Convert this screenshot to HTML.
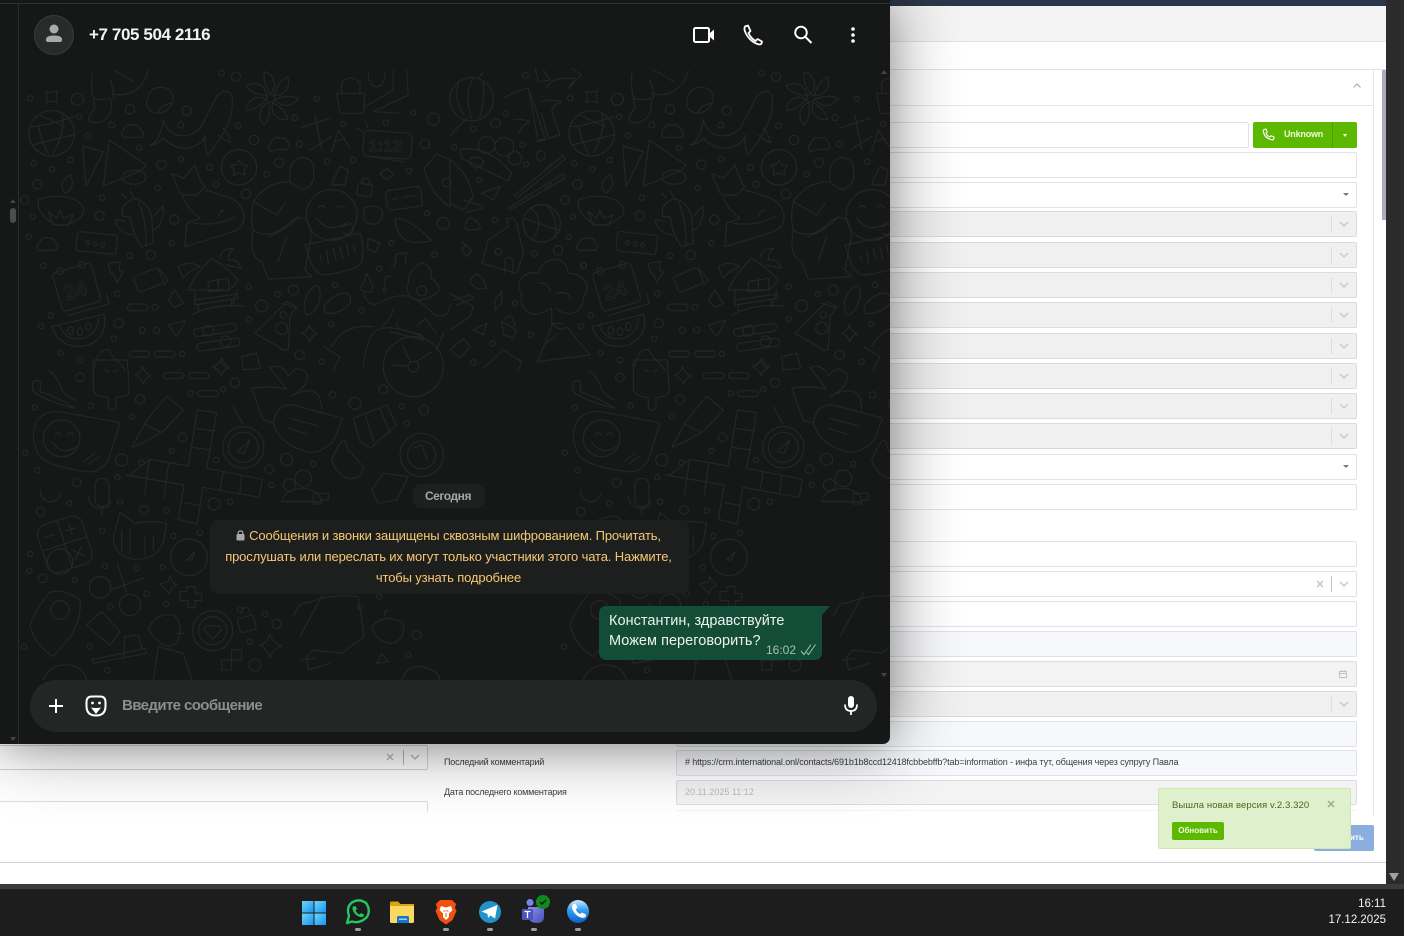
<!DOCTYPE html>
<html lang="ru"><head><meta charset="utf-8"><title>WhatsApp</title>
<style>
html,body{margin:0;padding:0;background:#fff}
body{width:1404px;height:936px;position:relative;overflow:hidden;font-family:"Liberation Sans","Noto Sans CJK SC",sans-serif}
.a{position:absolute}
.f{position:absolute;left:860px;width:495px;height:24px;border:1px solid #dfe2ea;border-radius:2px;background:#fff}
.g{background:#f0f0f1;border-color:#d9dbe2}
.l{background:#f7f8fb}
.s{background:#f3f3f4;border-color:#dcdcdf}
.dv{position:absolute;left:470px;top:4px;width:1px;height:16px;background:#dcdcdf}
.ch{position:absolute;left:477px;top:7px;width:12px;height:10px}
.ca{position:absolute;left:482px;top:10px;width:0;height:0;border:3px solid transparent;border-top:3px solid #777;border-bottom:0}
.t{position:absolute;white-space:nowrap}
.sh{position:absolute;left:0;top:0;width:890px;height:744px;border-radius:0 0 7px 0;box-shadow:0 0 70px rgba(0,0,0,.46),0 6px 28px rgba(0,0,0,.1)}
</style></head><body>

<!-- background app -->
<div class="a" style="left:860px;top:0;width:526px;height:6px;background:#2b3648"></div>
<div class="a" style="left:860px;top:6px;width:526px;height:35px;background:#f4f4f5"></div>
<div class="a" style="left:860px;top:41px;width:526px;height:1px;background:#dfe2e8"></div>
<div class="a" style="left:860px;top:69px;width:526px;height:1px;background:#dfe2e8"></div>
<div class="a" style="left:860px;top:105px;width:513px;height:1px;background:#e4e7ed"></div>
<div class="a" style="left:1373px;top:70px;width:1px;height:745px;background:#e4e6ec"></div>
<div class="a" style="left:1382px;top:70px;width:4px;height:150px;background:#a9aeb9"></div>
<svg class="a" style="left:1352px;top:82px" width="10" height="8"><path d="M1.5 5.5L5 2l3.5 3.5" fill="none" stroke="#a8adb8" stroke-width="1.2"/></svg>

<div class="f" style="top:122px;width:387px"></div>
<div class="a" style="left:1253px;top:122px;width:104px;height:26px;background:#5cb800;border-radius:2px"></div>
<div class="a" style="left:1332px;top:122px;width:1px;height:26px;background:#4f9e00"></div>
<svg class="a" style="left:1262px;top:128px" width="13" height="13" viewBox="0 0 13 13"><path d="M2 1.500L4 1l1.200 3L4 5.200Q5 8 7.800 9l1.200-1.200 3 1.200-.4 2.300Q11.400 12 10 11.800 2.500 10.500 1.200 3 1.200 2 2 1.500Z" fill="none" stroke="#fff" stroke-width="1.100"/></svg>
<div class="t" style="left:1284px;top:128px;font-size:9px;line-height:13px;font-weight:bold;color:#eefadb;letter-spacing:-.2px">Unknown</div>
<div class="a" style="left:1343px;top:134px;border:2px solid transparent;border-top:3px solid #fff;border-bottom:0"></div>

<div class="f" style="top:152px"></div>
<div class="f" style="top:182px"><div class="ca"></div></div>
<div class="f g" style="top:211px"><div class="dv"></div><svg class="ch" viewBox="0 0 12 10"><path d="M2 3l4 4 4-4" fill="none" stroke="#c5c7cc" stroke-width="1.300"/></svg></div>
<div class="f g" style="top:242px"><div class="dv"></div><svg class="ch" viewBox="0 0 12 10"><path d="M2 3l4 4 4-4" fill="none" stroke="#c5c7cc" stroke-width="1.300"/></svg></div>
<div class="f g" style="top:272px"><div class="dv"></div><svg class="ch" viewBox="0 0 12 10"><path d="M2 3l4 4 4-4" fill="none" stroke="#c5c7cc" stroke-width="1.300"/></svg></div>
<div class="f g" style="top:302px"><div class="dv"></div><svg class="ch" viewBox="0 0 12 10"><path d="M2 3l4 4 4-4" fill="none" stroke="#c5c7cc" stroke-width="1.300"/></svg></div>
<div class="f g" style="top:333px"><div class="dv"></div><svg class="ch" viewBox="0 0 12 10"><path d="M2 3l4 4 4-4" fill="none" stroke="#c5c7cc" stroke-width="1.300"/></svg></div>
<div class="f g" style="top:363px"><div class="dv"></div><svg class="ch" viewBox="0 0 12 10"><path d="M2 3l4 4 4-4" fill="none" stroke="#c5c7cc" stroke-width="1.300"/></svg></div>
<div class="f g" style="top:393px"><div class="dv"></div><svg class="ch" viewBox="0 0 12 10"><path d="M2 3l4 4 4-4" fill="none" stroke="#c5c7cc" stroke-width="1.300"/></svg></div>
<div class="f g" style="top:423px"><div class="dv"></div><svg class="ch" viewBox="0 0 12 10"><path d="M2 3l4 4 4-4" fill="none" stroke="#c5c7cc" stroke-width="1.300"/></svg></div>
<div class="f" style="top:454px"><div class="ca"></div></div>
<div class="f" style="top:484px"></div>
<div class="f" style="top:541px"></div>
<div class="f" style="top:571px"><svg class="a" style="left:454px;top:7px" width="10" height="10"><path d="M2 2l6 6M8 2l-6 6" stroke="#c2c4c9" stroke-width="1.400"/></svg><div class="dv" style="background:#bfc1c6"></div><svg class="ch" viewBox="0 0 12 10"><path d="M2 3l4 4 4-4" fill="none" stroke="#c5c7cc" stroke-width="1.300"/></svg></div>
<div class="f" style="top:601px"></div>
<div class="f l" style="top:631px"></div>
<div class="f s" style="top:661px"><svg class="a" style="left:477px;top:7px" width="10" height="10"><path d="M1.500 2.500h7v6h-7zM1.500 4.500h7M3.500 1v2M6.500 1v2" fill="none" stroke="#c0c2c6"/></svg></div>
<div class="f g" style="top:691px"><div class="dv" style="background:#e0e0e4"></div><svg class="ch" viewBox="0 0 12 10"><path d="M2 3l4 4 4-4" fill="none" stroke="#c5c7cc" stroke-width="1.300"/></svg></div>
<div class="f l" style="left:676px;top:721px;width:679px"></div>

<div class="f l" style="left:676px;top:750px;width:679px;height:24px"></div>
<div class="t" style="left:685px;top:756px;font-size:9px;line-height:12px;color:#3a3d45;letter-spacing:-.12px">#&nbsp;https://crm.international.onl/contacts/691b1b8ccd12418fcbbebffb?tab=information - инфа тут, общения через супругу Павла</div>
<div class="f s" style="left:676px;top:780px;width:679px;height:23px"></div>
<div class="t" style="left:685px;top:786px;font-size:9px;line-height:12px;color:#b9bbc0">20.11.2025 11:12</div>
<div class="a" style="left:676px;top:810px;width:681px;height:1px;background:#f2f3f6"></div>

<div class="f" style="left:-20px;top:745px;width:446px;height:23px;border-color:#cfd3dd"></div>
<svg class="a" style="left:385px;top:752px" width="10" height="10"><path d="M2 2l6 6M8 2l-6 6" stroke="#b4b6bb" stroke-width="1.400"/></svg>
<div class="a" style="left:403px;top:750px;width:1px;height:15px;background:#b4b6bb"></div>
<svg class="a" style="left:409px;top:752px" width="12" height="10"><path d="M2 3l4 4 4-4" fill="none" stroke="#b4b6bb" stroke-width="1.300"/></svg>
<div class="a" style="left:-20px;top:801px;width:446px;height:14px;border:1px solid #dadde6;border-bottom:0;border-radius:2px"></div>
<div class="a" style="left:0;top:812px;width:430px;height:8px;background:#fff"></div>
<div class="t" style="left:444px;top:756px;font-size:9px;line-height:12px;color:#3c3f46;letter-spacing:-.2px">Последний комментарий</div>
<div class="t" style="left:444px;top:786px;font-size:9px;line-height:12px;color:#3c3f46;letter-spacing:-.2px">Дата последнего комментария</div>

<div class="a" style="left:1314px;top:825px;width:60px;height:26px;background:#8aaee0;border-radius:2px"></div>
<div class="t" style="left:1350px;top:832px;font-size:8px;line-height:12px;font-weight:bold;color:#fff">ить</div>
<div class="a" style="left:0;top:862px;width:1386px;height:1px;background:#ccd1dc"></div>

<!-- shadow + WA window -->
<div class="sh"></div>
<div class="a" style="left:0;top:0;width:890px;height:744px;background:#161717;border-radius:0 0 7px 0;overflow:hidden">
<svg class="a" style="left:0;top:0" width="890" height="744" viewBox="0 0 890 744">
<defs>
<clipPath id="cp"><rect x="19" y="68" width="871" height="676"/></clipPath>
<g id="tile" fill="none" stroke="#252727" stroke-linejoin="round" stroke-linecap="round">
<g transform="translate(20 70) scale(.3333)" stroke-width="3.600">
<circle cx="172" cy="88" r="18"/><circle cx="30" cy="85" r="8"/><circle cx="177" cy="140" r="8"/><circle cx="275" cy="165" r="9"/><circle cx="203" cy="197" r="8"/><circle cx="330" cy="118" r="14"/><circle cx="500" cy="122" r="14"/><circle cx="482" cy="165" r="9"/><circle cx="655" cy="167" r="8"/><circle cx="702" cy="210" r="14"/><circle cx="838" cy="222" r="9"/><circle cx="777" cy="278" r="14"/><circle cx="922" cy="275" r="8"/><circle cx="1000" cy="270" r="8"/><circle cx="1215" cy="222" r="14"/><circle cx="1167" cy="302" r="8"/><circle cx="1240" cy="148" r="18"/><circle cx="1180" cy="128" r="8"/><circle cx="1098" cy="158" r="8"/><circle cx="970" cy="162" r="8"/><circle cx="825" cy="143" r="9"/><circle cx="890" cy="86" r="8"/><circle cx="648" cy="20" r="14"/><circle cx="605" cy="9" r="8"/><circle cx="357" cy="233" r="8"/><circle cx="424" cy="284" r="14"/><circle cx="483" cy="267" r="8"/><circle cx="570" cy="292" r="9"/><circle cx="740" cy="312" r="8"/><circle cx="588" cy="343" r="9"/><circle cx="678" cy="372" r="14"/><circle cx="413" cy="354" r="8"/><circle cx="246" cy="383" r="8"/><circle cx="150" cy="270" r="8"/><circle cx="97" cy="298" r="8"/><circle cx="42" cy="280" r="8"/><circle cx="52" cy="343" r="14"/><circle cx="15" cy="390" r="13"/><circle cx="38" cy="440" r="8"/><circle cx="239" cy="437" r="14"/><circle cx="463" cy="449" r="14"/><circle cx="455" cy="520" r="8"/><circle cx="392" cy="555" r="14"/><circle cx="330" cy="557" r="8"/><circle cx="26" cy="501" r="8"/><circle cx="70" cy="587" r="8"/><circle cx="292" cy="671" r="8"/><circle cx="405" cy="712" r="9"/><circle cx="92" cy="736" r="8"/><circle cx="63" cy="768" r="8"/><circle cx="296" cy="760" r="14"/><circle cx="367" cy="781" r="9"/><circle cx="410" cy="781" r="9"/><circle cx="282" cy="806" r="8"/><circle cx="122" cy="849" r="8"/><circle cx="181" cy="870" r="8"/><circle cx="486" cy="852" r="8"/><circle cx="686" cy="650" r="8"/><circle cx="820" cy="660" r="15"/><circle cx="773" cy="672" r="8"/><circle cx="725" cy="708" r="18"/><circle cx="686" cy="748" r="8"/><circle cx="839" cy="855" r="14"/><circle cx="905" cy="875" r="8"/><circle cx="934" cy="763" r="8"/><circle cx="945" cy="645" r="8"/><circle cx="1025" cy="722" r="8"/><circle cx="1077" cy="596" r="8"/><circle cx="1115" cy="520" r="8"/><circle cx="1243" cy="554" r="8"/><circle cx="1221" cy="430" r="8"/><circle cx="1270" cy="460" r="18"/>
<circle cx="95" cy="190" r="68"/><path d="M30 170Q90 165 160 140M35 225L160 195M55 170Q65 215 85 250M125 130Q140 175 100 250M60 135Q90 150 135 170"/>
<path d="M78 65Q95 70 112 62 106 80 112 98 95 90 78 98 84 80 78 65Z"/>
<path d="M216 10Q212 50 220 85 245 92 272 85 280 120 260 145 235 165 210 155 198 145 225 115L220 85M270 30Q282 60 280 85M280 0Q320 20 340 35M385 0Q370 60 320 72 295 78 275 70"/>
<path d="M385 75Q395 50 430 52 462 60 460 90 450 125 415 130 380 125 380 100ZM415 128Q420 105 455 100"/>
<path d="M390 225Q420 215 430 150 440 185 470 195 510 205 540 175 570 120 590 80 620 50 635 75 645 120 615 180 590 225 565 255 555 250 555 195 550 225 500 235 460 235 430 205 410 225 390 225ZM610 175Q625 190 632 218 610 210 595 195"/>
<path d="M312 202Q298 190 312 178 318 160 340 165 360 165 360 178 378 188 365 202ZM752 245Q740 232 752 220 760 198 782 204 800 202 802 215 815 228 800 240Q775 235 752 245ZM55 542Q45 530 58 518 66 500 86 504 104 504 104 516 122 526 108 540Z"/>
<g transform="translate(752 85)"><path d="M0-14Q-26-50-18-80 10-70 12-40 10-25 0-14Z"/><path d="M0-14Q-26-50-18-80 10-70 12-40 10-25 0-14Z" transform="rotate(51)"/><path d="M0-14Q-26-50-18-80 10-70 12-40 10-25 0-14Z" transform="rotate(103)"/><path d="M0-14Q-26-50-18-80 10-70 12-40 10-25 0-14Z" transform="rotate(154)"/><path d="M0-14Q-26-50-18-80 10-70 12-40 10-25 0-14Z" transform="rotate(206)"/><path d="M0-14Q-26-50-18-80 10-70 12-40 10-25 0-14Z" transform="rotate(257)"/><path d="M0-14Q-26-50-18-80 10-70 12-40 10-25 0-14Z" transform="rotate(309)"/><circle r="12"/></g>
<path d="M840 175L930 145M885 135L905 240M870 240L935 200M935 245L955 180 990 235M945 215L975 205"/>
<path d="M950 70L1035 70 1030 130 960 130ZM965 70V38Q990 10 1020 38V70M1035 110L1120 60V0M1160 0L1165 75 1060 125 1140 130M1045 5Q1045 50 1070 50 1095 50 1095 5"/>
<rect x="1030" y="185" width="145" height="78" rx="16" transform="rotate(4 1100 225)"/><path d="M1045 258L1150 276M1010 175L1030 185M1035 155L1045 175"/>
<text x="1046" y="245" font-size="50" font-weight="bold" font-family="Liberation Sans" stroke-width="2.500">1:13</text>
<path d="M1212 295L1250 252 1290 270V410Q1230 370 1212 295Z"/><circle cx="1280" cy="337" r="13"/>
<path d="M1100 295L1120 312 1102 330 1080 312ZM960 290L985 300 975 345 935 345 945 320Z"/>
<rect x="1012" y="342" width="44" height="36" rx="7" transform="rotate(8 1034 360)"/><path d="M1026 340V330Q1036 318 1048 332V344"/>
<rect x="1100" y="355" width="105" height="60" rx="10" transform="rotate(-8 1152 385)"/><path d="M1118 388l16-3M1150 382l16-3M1172 380l16-3"/>
<path d="M1032 415Q1060 400 1085 420 1095 445 1070 462 1040 465 1030 445Z"/>
<path d="M1126 445Q1170 445 1235 512 1180 525 1150 505 1125 480 1126 445Z"/>
<path d="M188 228L250 245 198 350ZM268 210L378 285 365 300Q310 325 250 348Z"/><ellipse cx="342" cy="322" rx="36" ry="21"/>
<path d="M55 390Q120 365 175 395 215 430 160 455 120 480 85 450 50 425 55 390ZM135 370Q110 340 150 315 170 350 135 370ZM85 425L110 445 120 420 130 445 160 435 145 465H100Z"/>
<path d="M455 310L490 325 525 285 545 340 555 350 530 375H490L480 370ZM490 380Q495 410 540 445L500 460 495 530 640 485Q675 470 672 435 665 395 620 380L555 360M520 460Q590 470 645 440M595 440Q600 420 615 420"/>
<circle cx="657" cy="292" r="53"/><path d="M657 270L665 284 682 286 672 300 675 316 657 308 640 316 642 298 632 286 650 284Z"/>
<path d="M810 300Q815 265 850 262 885 270 880 300 890 340 850 360 825 350 810 335ZM700 395Q740 335 810 335M700 395L770 435 795 400M700 395Q690 450 700 480 745 510 795 470 830 430 860 450 880 480 870 520L855 600M700 480Q685 560 725 575L745 628 875 620 850 595M775 575L800 500M745 500Q800 480 835 440"/>
<circle cx="935" cy="435" r="76"/><path d="M895 415Q905 400 918 415M952 415Q962 400 975 415M890 445Q930 495 985 455M965 470L995 460 1000 485Q985 500 970 490"/>
<path d="M855 525L1020 490Q1035 530 1025 575 1020 600 915 615 885 615 870 570ZM900 555L905 575M920 540L925 580M940 535L948 570M960 530L968 565M980 525L985 555M1000 525L1005 545"/>
<path d="M308 440Q300 400 345 385 385 400 395 440L400 520 365 530Q340 500 330 440ZM305 370L320 385M330 360L345 390M355 395Q380 450 378 525M400 440Q425 410 430 410 430 470 400 480M315 455Q285 445 285 450 295 490 340 495"/>
<rect x="170" y="490" width="120" height="58" rx="8" transform="rotate(6 230 520)"/><circle cx="203" cy="518" r="6"/><circle cx="226" cy="522" r="6"/><circle cx="248" cy="525" r="6"/>
<g transform="rotate(-16 175 650)"><rect x="110" y="590" width="120" height="120" rx="12"/><circle cx="135" cy="590" r="10"/><circle cx="205" cy="590" r="10"/><path d="M120 725H250V695"/><text x="128" y="680" font-size="62" font-weight="bold" font-family="Liberation Sans" stroke-width="2.500">24</text></g>
<path d="M265 580L300 575 298 600 310 605 290 638 280 610 272 610Z"/>
<rect x="345" y="605" width="80" height="50" rx="8" transform="rotate(-22 385 630)"/><path d="M415 595L445 630 430 645"/>
<path d="M505 660Q520 620 575 565 620 590 655 630 640 655 620 660H520ZM525 660V690M650 660L640 700M522 690L652 672 654 685 525 705ZM535 705V725M635 690V710M515 735Q580 700 675 708M565 635L625 625 628 660 565 665ZM595 625V665M475 590Q510 570 540 590 510 600 490 625ZM600 565Q605 535 640 535 625 550 625 570 650 565 665 595 640 590 620 585"/>
<path d="M445 690L465 660 490 700 464 712ZM322 712A10 10 0 0 1 332 702H374A10 10 0 0 1 374 722H332A10 10 0 0 1 322 712Z"/>
<path d="M95 770L252 733Q265 800 205 825 125 845 95 770ZM118 765Q135 815 190 805 235 790 235 745"/><ellipse cx="152" cy="782" rx="8" ry="12"/><ellipse cx="180" cy="785" rx="8" ry="12"/><ellipse cx="205" cy="770" rx="8" ry="12"/>
<path d="M445 765L497 752 470 800Z"/>
<rect x="520" y="768" width="130" height="24" rx="12" transform="rotate(-8 585 780)"/><circle cx="565" cy="782" r="16"/><rect x="530" y="812" width="130" height="24" rx="12" transform="rotate(-8 595 824)"/><circle cx="617" cy="814" r="16"/>
<path d="M705 790L800 695 830 710 810 740 805 838Q790 845 775 830ZM785 700L830 715"/><circle cx="785" cy="775" r="18"/><circle cx="790" cy="735" r="10"/>
<path d="M860 735Q840 690 880 650 905 640 900 685 885 735 860 735ZM915 730Q900 700 960 670 1000 665 990 700 960 735 915 730Z"/>
<path d="M845 790Q862 785 868 765 875 785 892 792 875 795 870 815 862 795 845 790Z"/>
<circle cx="1180" cy="890" r="90"/><circle cx="1180" cy="890" r="16"/><path d="M1150 830L1170 875M1190 875L1235 845M1115 885L1165 888"/>
<path d="M910 830L960 860 940 900M935 830Q970 760 1060 770M1030 890Q1040 800 1070 780 1110 760 1210 800M1110 785L1210 810 1205 795 1135 775 1130 760M1250 840L1270 790M1190 770L1215 745 1250 790"/>
<rect x="328" y="843" width="60" height="18" rx="9"/><rect x="403" y="843" width="62" height="18" rx="9"/>
<path d="M225 890Q230 840 265 838 275 860 300 880L315 900"/><path d="M575 890Q600 885 605 865 615 885 628 890 610 900 605 915"/><path d="M665 860L710 850 722 895 670 900Z"/>
<path d="M1030 640L1040 610 1055 640Q1060 650 1055 665 1030 670 1020 655ZM1030 665Q1045 720 1085 695 1130 670 1170 680 1200 690 1245 735 1290 745 1290 705M1120 720Q1110 750 1090 765M1165 640Q1165 600 1205 578 1240 590 1232 625 1260 640 1255 665 1225 690 1195 690 1165 690 1160 650Z"/><circle cx="1205" cy="663" r="15"/>
<path d="M1112 590Q1120 585 1125 590M1125 590L1128 553 1160 548 1155 585M1097 620L1092 655M1097 620L1112 618"/><circle cx="1095" cy="660" r="5"/>
<path d="M1045 505L1080 520 1065 548 1042 535Z"/>
</g>
<g transform="translate(20 360) scale(.3333)" stroke-width="3.600">
<circle cx="180" cy="52" r="13"/><circle cx="44" cy="143" r="8"/><circle cx="212" cy="137" r="8"/><circle cx="335" cy="170" r="8"/><circle cx="360" cy="118" r="14"/><circle cx="512" cy="100" r="8"/><circle cx="645" cy="68" r="14"/><circle cx="610" cy="88" r="8"/><circle cx="938" cy="105" r="10"/><circle cx="1005" cy="130" r="18"/><circle cx="1090" cy="88" r="13"/><circle cx="1145" cy="138" r="8"/><circle cx="1212" cy="150" r="14"/><circle cx="1160" cy="190" r="8"/><circle cx="488" cy="232" r="13"/><circle cx="455" cy="272" r="8"/><circle cx="305" cy="300" r="18"/><circle cx="365" cy="308" r="8"/><circle cx="15" cy="278" r="8"/><circle cx="52" cy="330" r="8"/><circle cx="170" cy="368" r="13"/><circle cx="148" cy="430" r="8"/><circle cx="292" cy="352" r="8"/><circle cx="300" cy="425" r="8"/><circle cx="372" cy="450" r="13"/><circle cx="440" cy="452" r="8"/><circle cx="582" cy="432" r="18"/><circle cx="630" cy="425" r="8"/><circle cx="588" cy="300" r="8"/><circle cx="748" cy="328" r="13"/><circle cx="755" cy="375" r="8"/><circle cx="800" cy="298" r="18"/><circle cx="880" cy="312" r="8"/><circle cx="62" cy="455" r="13"/><circle cx="246" cy="512" r="8"/><circle cx="460" cy="528" r="8"/><circle cx="540" cy="518" r="8"/><circle cx="30" cy="582" r="8"/><circle cx="68" cy="655" r="13"/><circle cx="28" cy="632" r="8"/><circle cx="164" cy="660" r="8"/><circle cx="350" cy="625" r="8"/><circle cx="254" cy="618" r="8"/><circle cx="428" cy="622" r="8"/><circle cx="380" cy="702" r="8"/><circle cx="438" cy="732" r="8"/><circle cx="270" cy="740" r="8"/><circle cx="660" cy="750" r="8"/><circle cx="735" cy="762" r="8"/><circle cx="770" cy="792" r="14"/><circle cx="690" cy="845" r="8"/><circle cx="705" cy="915" r="18"/><circle cx="1190" cy="825" r="13"/><circle cx="1165" cy="885" r="8"/><circle cx="1078" cy="710" r="8"/><circle cx="1020" cy="740" r="8"/><circle cx="210" cy="860" r="8"/><circle cx="12" cy="860" r="8"/><circle cx="262" cy="930" r="8"/>
<path d="M40 65Q70 50 60 95 110 110 165 145 100 130 55 105 30 95 40 65ZM85 30Q115 50 125 90 140 110 165 120"/>
<path d="M220 0V90Q225 110 265 112V145Q275 155 288 145V112Q325 110 328 95L322 0ZM255 30L265 35M292 30L280 35"/>
<path d="M345 45Q362 40 368 20 375 40 392 48 375 55 370 72 362 52 345 45ZM578 20Q595 15 602 0 608 18 625 25 610 30 603 46 596 28 578 20Z"/>
<rect x="430" y="38" width="62" height="18" rx="9"/><rect x="505" y="38" width="62" height="18" rx="9"/><rect x="533" y="92" width="62" height="18" rx="9"/>
<path d="M40 225Q45 150 120 155L300 188 265 300Q240 340 200 335 90 320 60 290 40 260 40 225Z"/><circle cx="125" cy="235" r="55"/><path d="M105 225Q115 212 125 225M140 225Q150 212 160 225M95 245Q125 290 170 260M190 305L225 280M205 312L240 288"/>
<path d="M335 262L380 182 440 108 490 150 432 212 375 245ZM370 190L420 215"/>
<path d="M532 150L590 158 560 325 727 358 718 412 548 382 532 492 475 478 492 375 318 345 330 345 390 298 505 318ZM527 205L583 213M517 262L572 270M388 298L374 405M446 308L432 412M610 335L600 390M665 345L660 400M493 428L542 437"/>
<circle cx="670" cy="262" r="62"/><circle cx="670" cy="262" r="45"/><path d="M640 140L668 190M652 275L690 240 672 280Z"/>
<path d="M695 85Q750 75 800 88L750 22Q790 10 805 50 830 10 860 40 870 80 810 110 905 60 905 150M695 85L730 180 760 190"/>
<path d="M760 190Q770 130 820 135L968 175 942 240Q900 285 860 275 780 255 760 190ZM810 175L895 198M805 205L860 222"/>
<path d="M1000 175L1100 135 1130 195 1050 265 1020 245ZM1035 160L1062 245M1080 145L1110 220"/>
<circle cx="1205" cy="285" r="65"/><circle cx="1205" cy="285" r="42"/><path d="M1180 265L1205 255 1222 300"/>
<path d="M935 300Q960 240 975 240L985 270 1030 320Q1030 360 985 355 950 345 935 300Z"/>
<path d="M1055 390L1090 340 1165 350 1130 420 1075 430Z"/>
<circle cx="850" cy="355" r="25"/><circle cx="808" cy="375" r="18"/><path d="M785 425Q790 390 850 385 900 390 905 425ZM880 400H925V420H905V432H880Z"/>
<path d="M62 390A30 30 0 1 0 122 400 30 30 0 0 1 62 390Z"/>
<rect x="225" y="355" width="42" height="85" rx="21"/><path d="M205 410Q210 445 245 445 275 445 270 420M245 445V465"/>
<g transform="rotate(-18 135 555)"><rect x="65" y="478" width="140" height="150" rx="30"/><path d="M135 478V628M65 552H205M85 515h30M150 515h30M165 500v30M150 575l30 30M180 575l-30 30"/></g><circle cx="120" cy="605" r="38"/>
<path d="M280 530L300 458 345 490Q385 480 440 490L430 545Q410 600 345 598 280 590 280 530ZM305 510V575M330 510V580M375 530V585M400 530V570"/>
<circle cx="507" cy="592" r="55"/><path d="M500 600L525 575 515 600Z"/>
<circle cx="240" cy="682" r="32"/><circle cx="330" cy="735" r="32"/><path d="M270 690L370 655M292 610L320 700"/>
<path d="M418 672L445 665 450 648 458 665 470 675 455 685 448 700Z"/><path d="M480 695H500V680H525V700H545V722H525V742H505V722H480Z"/>
<path d="M30 800Q40 760 85 700 120 680 180 720 185 780 150 830L100 890Q50 860 30 800Z"/><circle cx="120" cy="750" r="28"/>
<path d="M198 795L245 755 300 815 270 855ZM215 900L375 865 380 880 220 910ZM310 895L315 830 355 825 365 865"/>
<path d="M385 810Q400 760 460 765 495 790 470 850 440 870 410 840ZM470 820H490M400 960L415 860 490 880 515 960"/>
<circle cx="578" cy="812" r="60"/><circle cx="578" cy="812" r="42"/><path d="M578 838L552 810Q555 790 578 800 600 790 604 810Z"/>
<rect x="655" y="770" width="50" height="44" rx="8" transform="rotate(-14 680 790)"/><path d="M665 760Q670 735 685 745L692 765"/>
<path d="M720 855Q742 850 750 822 758 850 785 858 760 865 750 892 740 865 720 855ZM1070 910L1085 880 1105 905Z"/>
<path d="M605 900h30v30h-30zM635 870h30v30h-30z"/>
<path d="M820 770Q840 720 860 730 930 700 1015 710L1032 830 965 880 880 870 860 890 865 930 930 910M840 830L910 700M845 900L885 895"/>
<path d="M1055 800Q1090 760 1145 785 1165 830 1120 850 1070 850 1055 800ZM1095 770Q1090 755 1105 750"/>
<path d="M1145 960Q1160 915 1205 920 1255 930 1260 960"/>
<path d="M70 960Q90 910 150 915 190 925 200 960"/>
</g>
<g transform="translate(450 60) scale(.3333)" stroke-width="3.600">
<circle cx="226" cy="46" r="9"/><circle cx="502" cy="118" r="18"/><circle cx="361" cy="115" r="8"/><circle cx="167" cy="160" r="8"/><circle cx="137" cy="190" r="14"/><circle cx="70" cy="207" r="8"/><circle cx="12" cy="262" r="8"/><circle cx="217" cy="254" r="8"/><circle cx="272" cy="287" r="14"/><circle cx="228" cy="313" r="8"/><circle cx="88" cy="360" r="8"/><circle cx="135" cy="480" r="8"/><circle cx="368" cy="470" r="8"/><circle cx="356" cy="531" r="8"/><circle cx="254" cy="581" r="8"/><circle cx="324" cy="571" r="14"/><circle cx="402" cy="617" r="8"/><circle cx="195" cy="730" r="8"/><circle cx="242" cy="825" r="8"/><circle cx="128" cy="851" r="8"/><circle cx="70" cy="907" r="8"/>
<circle cx="65" cy="118" r="65"/><path d="M25 70Q10 120 40 165M70 55Q40 100 65 175M100 65Q105 120 90 170M100 35L85 55M50 175L20 205 0 230"/>
<path d="M165 112Q190 95 235 85L265 245 290 238M255 245 285 235 240 95M275 125Q300 115 335 125 310 135 305 150L330 225 295 235 275 160M190 180Q220 175 240 185 215 195 205 222"/>
<path d="M290 85Q300 50 375 55L355 85 395 45 365 25M255 25L265 65 300 60 280 30"/>
<path d="M30 270Q60 260 100 275 145 290 185 340L175 362 135 345 35 295ZM85 255a25 25 0 1 1 0 .1M135 260a28 28 0 1 1 0 .1M175 295a20 20 0 1 1 0 .1"/>
<path d="M60 295Q85 285 102 305 95 320 78 325 55 315 60 295Z"/>
<path d="M0 300Q55 340 70 410L40 450 0 430"/><path d="M40 420L100 440 95 445 45 458M95 400L150 380 130 420Z"/>
<path d="M190 410L340 285 345 298 200 415M175 445L340 340 345 355 180 450M285 330L305 310M285 385L305 370"/>
<circle cx="275" cy="490" r="56"/><path d="M222 475L330 512M245 445Q285 480 250 535M290 435Q325 470 315 535"/>
<path d="M45 505Q50 460 75 480 95 500 90 505 60 515 45 505ZM35 545L65 570 50 590 35 570 45 555Z"/>
<path d="M95 610L115 540 175 500 170 475 190 475 200 490 220 580 200 640ZM135 575a10 10 0 1 1 0 .1M165 640V600Q175 585 190 600L188 640"/>
<path d="M60 660L80 640 100 660 110 685 80 685 60 670ZM135 720L155 695 155 730 135 750Z"/>
<path d="M300 745C240 790 205 740 215 700 190 660 230 630 265 640 275 590 350 580 355 640 400 640 430 680 400 710 400 770 340 770 320 745M320 700Q360 690 360 720M265 670Q290 665 300 690M305 745V790L340 790"/>
<path d="M262 905L310 790Q330 820 350 800L420 885ZM290 850L325 820"/>
<path d="M70 810L110 790 100 825ZM155 785L200 810 190 835 160 825ZM165 780Q170 765 185 770L195 800"/>
<path d="M0 700L70 740 60 770 0 810M10 720L60 705 70 715 20 735"/><path d="M0 870L40 835 60 860 30 895Z"/>
<path d="M100 925L160 870 215 905 205 930"/>
</g>
</g>
</defs>
<g clip-path="url(#cp)"><use href="#tile"/><use href="#tile" x="540"/></g>
</svg>

<div class="a" style="left:0;top:3px;width:890px;height:1px;background:#2f3030"></div>
<div class="a" style="left:18px;top:4px;width:1px;height:740px;background:#2b2d2d"></div>
<div class="a" style="left:0;top:4px;width:18px;height:740px;background:#161717"></div>
<div class="a" style="left:10px;top:208px;width:6px;height:15px;background:#4c4d4d;border-radius:3px"></div>
<div class="a" style="left:10px;top:199px;border:3px solid transparent;border-bottom:4px solid #444;border-top:0"></div>
<div class="a" style="left:10px;top:737px;border:3px solid transparent;border-top:4px solid #444;border-bottom:0"></div>
<div class="a" style="left:881px;top:70px;border:3px solid transparent;border-bottom:4px solid #444;border-top:0"></div>
<div class="a" style="left:881px;top:673px;border:3px solid transparent;border-top:4px solid #444;border-bottom:0"></div>

<!-- avatar / title -->
<svg class="a" style="left:33px;top:14px" width="42" height="42" viewBox="0 0 42 42"><circle cx="21" cy="21" r="19.500" fill="#292a2a" stroke="#3a3b3b"/><circle cx="21" cy="15" r="4.500" fill="#a9aaaa"/><path d="M13 25.500Q13 21.500 21 21.500T29 25.500V26Q29 28 27 28H15Q13 28 13 26Z" fill="#a9aaaa"/></svg>
<div class="t" style="left:89px;top:25px;font-size:17px;line-height:20px;font-weight:bold;color:#f2f3f3;letter-spacing:-.4px">+7 705 504 2116</div>

<!-- header icons -->
<svg class="a" style="left:690px;top:24px" width="28" height="22" viewBox="0 0 28 22" fill="none"><rect x="4" y="4" width="15" height="14" rx="1.500" stroke="#fff" stroke-width="2"/><path d="M20 9L24 5.500V16.500L20 13Z" fill="#fff"/></svg>
<svg class="a" style="left:741px;top:23px" width="24" height="24" viewBox="0 0 24 24" fill="none"><path d="M4 3.500L7 2.500 9.500 8 7.500 10Q9.500 15 14.500 18L16.500 16 21 18.500 20.500 20.500Q20 21.500 18.500 21.500 15 21 11 18 6 14 3.800 8 3 5 4 3.500Z" stroke="#fff" stroke-width="1.800" stroke-linejoin="round"/></svg>
<svg class="a" style="left:791px;top:23px" width="24" height="24" viewBox="0 0 24 24" fill="none"><circle cx="10" cy="9.500" r="5.800" stroke="#fff" stroke-width="1.900"/><path d="M14.500 14L20.500 20" stroke="#fff" stroke-width="2"/></svg>
<svg class="a" style="left:848px;top:25px" width="10" height="20" viewBox="0 0 10 20" fill="#fff"><circle cx="5" cy="4" r="1.800"/><circle cx="5" cy="10" r="1.800"/><circle cx="5" cy="16" r="1.800"/></svg>

<!-- chat -->
<div class="a" style="left:413px;top:484px;width:72px;height:24px;background:#1e1f1f;border-radius:8px"></div>
<div class="t" style="left:412px;top:488px;width:72px;text-align:center;font-size:12px;line-height:16px;font-weight:bold;color:#a5a7a8;letter-spacing:-.45px">Сегодня</div>

<div class="a" style="left:210px;top:520px;width:479px;height:74px;background:#1d1e1e;border-radius:8px"></div>
<div class="t" style="left:209px;top:525px;width:479px;text-align:center;font-size:13px;line-height:21px;color:#f7c873;white-space:normal;letter-spacing:-.14px"><svg width="9" height="11" viewBox="0 0 9 11" style="vertical-align:-1px;margin-right:4px"><rect x=".5" y="4" width="8" height="6.500" rx="1" fill="#a8a9a9"/><path d="M2.200 4.500V3Q2.200 1 4.500 1T6.800 3V4.500" fill="none" stroke="#a8a9a9" stroke-width="1.200"/></svg>Сообщения и звонки защищены сквозным шифрованием. Прочитать,<br>прослушать или переслать их могут только участники этого чата. Нажмите,<br>чтобы узнать подробнее</div>

<svg class="a" style="left:599px;top:606px" width="232" height="54"><path d="M8 0H231L223 9V46Q223 54 215 54H8Q0 54 0 46V8Q0 0 8 0Z" fill="#144d37"/></svg>
<div class="t" style="left:609px;top:611px;font-size:14.500px;line-height:20px;color:#eef1f0;letter-spacing:.03px">Константин, здравствуйте<br>Можем переговорить?</div>
<div class="t" style="left:766px;top:642px;font-size:12px;line-height:16px;color:#a3c2b4">16:02</div>
<svg class="a" style="left:800px;top:643px" width="16" height="13" viewBox="0 0 16 13" fill="none" stroke="#a3c2b4" stroke-width="1"><path d="M1 8l3 3.500L11 1.500M6.500 9.500l2 2L15.500 1.500"/></svg>

<!-- composer -->
<div class="a" style="left:30px;top:680px;width:847px;height:52px;background:#242626;border-radius:26px"></div>
<svg class="a" style="left:46px;top:696px" width="20" height="20" fill="none" stroke="#fff" stroke-width="2"><path d="M10 3V17M3 10H17"/></svg>
<svg class="a" style="left:85px;top:695px" width="22" height="22" viewBox="0 0 22 22" fill="none" stroke="#fff" stroke-width="2"><path d="M7 1.500H15Q20.500 1.500 20.500 7V11Q20.500 20.500 11 20.500 1.500 20.500 1.500 11V7Q1.500 1.500 7 1.500Z"/><path d="M6 12.500Q11 13.500 16 12.500L11 19Z" fill="#fff" stroke="none"/><circle cx="7.500" cy="8" r="1.400" fill="#fff" stroke="none"/><circle cx="14.500" cy="8" r="1.400" fill="#fff" stroke="none"/></svg>
<div class="t" style="left:122px;top:696px;font-size:15px;line-height:20px;font-weight:bold;color:#8c8d8d;letter-spacing:-.6px">Введите сообщение</div>
<svg class="a" style="left:841px;top:695px" width="20" height="22" viewBox="0 0 20 22" fill="none"><rect x="7" y="1" width="6" height="12" rx="3" fill="#fff"/><path d="M4 9.500Q4 16 10 16T16 9.500M10 16V20" stroke="#fff" stroke-width="1.800"/></svg>
</div>

<!-- update toast -->
<div class="a" style="left:1158px;top:788px;width:191px;height:59px;background:#dff0cc;border:1px solid #cfe8b0;border-radius:2px"></div>
<div class="t" style="left:1172px;top:799px;font-size:9.500px;line-height:13px;color:#46691d;letter-spacing:.1px">Вышла новая версия v.2.3.320</div>
<svg class="a" style="left:1326px;top:799px" width="10" height="10" stroke="#9db088" stroke-width="1.500"><path d="M2 2l6 6M8 2l-6 6"/></svg>
<div class="a" style="left:1172px;top:822px;width:52px;height:18px;background:#5cb800;border-radius:2px"></div>
<div class="t" style="left:1172px;top:824px;width:52px;text-align:center;font-size:8px;line-height:13px;font-weight:bold;color:#f2fae6">Обновить</div>

<!-- outer scrollbar + taskbar -->
<div class="a" style="left:1386px;top:0;width:18px;height:885px;background:#2b2b2b"></div>
<div class="a" style="left:1389px;top:873px;border:5px solid transparent;border-top:8px solid #a0a0a0;border-bottom:0"></div>
<div class="a" style="left:0;top:884px;width:1404px;height:5px;background:#3b3b3b"></div>
<div class="a" style="left:0;top:889px;width:1404px;height:47px;background:#1d1d1d"></div>

<svg class="a" style="left:296px;top:893px" width="300" height="43" viewBox="296 893 300 43">
<defs><linearGradient id="w" x1="0" y1="0" x2="1" y2="1"><stop offset="0" stop-color="#6fd3fa"/><stop offset="1" stop-color="#1596ee"/></linearGradient>
<linearGradient id="sk" x1="0" y1="0" x2="0" y2="1"><stop offset="0" stop-color="#cfeaff"/><stop offset=".45" stop-color="#2f9df0"/><stop offset="1" stop-color="#0a5fcb"/></linearGradient>
<linearGradient id="tm" x1="0" y1="0" x2="1" y2="1"><stop offset="0" stop-color="#8b8fea"/><stop offset="1" stop-color="#4b4fb5"/></linearGradient></defs>
<rect x="302" y="901" width="11.500" height="11.500" fill="url(#w)"/><rect x="314.500" y="901" width="11.500" height="11.500" fill="url(#w)"/><rect x="302" y="913.500" width="11.500" height="11.500" fill="url(#w)"/><rect x="314.500" y="913.500" width="11.500" height="11.500" fill="url(#w)"/>
<path d="M347 923L349 916Q346 907 352 902.500 359 898 366 903 371 910 367 917 360 924 352 921.500Z" fill="none" stroke="#25c463" stroke-width="2.400" stroke-linejoin="round"/>
<path d="M353 906.500L355.500 906 357 909 355.500 910.500Q356.500 913 359.500 914.500L361 913 364 914.500 363.500 916.500Q361 918 357.500 916 353.500 913.500 352.500 909Q352.500 907.500 353 906.500Z" fill="#25c463"/>
<path d="M390 903Q390 901.500 391.500 901.500H398L400.500 904H414V908H390Z" fill="#d9a514"/><path d="M390 906H414V921.500Q414 923 412.500 923H391.500Q390 923 390 921.500Z" fill="#fbd860"/><path d="M397 917.500Q397 916 398.500 916H407.500Q409 916 409 917.500V923H397Z" fill="#1679c7"/><rect x="399" y="918.500" width="8" height="1.500" fill="#8fd0f5"/>
<path d="M440 900H452L456 904 455 908 456.500 911 452.500 920 446 924.500 439.500 920 435.500 911 437 908 436 904Z" fill="#f1500f"/><path d="M441 906L446 907.500 451 906 452.500 910 449 913.500 449 917 446 920 443 917 443 913.500 439.500 910Z" fill="#fff"/><path d="M443.500 911h2M446.500 911h2M446 913v4" stroke="#f1500f" stroke-width="1"/>
<circle cx="490" cy="912" r="11" fill="#2193c9"/><path d="M481.500 911.500L497.500 905 495 918.500 490.500 915.500 488 918 487.500 914Z" fill="#fff"/>
<circle cx="530" cy="902.500" r="3.500" fill="#7b83eb"/><path d="M528 907H544V917Q544 923 537 923 530 923 528 917Z" fill="url(#tm)"/><rect x="522" y="909" width="11" height="11" rx="1" fill="#4b53bc"/><path d="M524.500 911.500h6M527.500 911.500v6.500" stroke="#fff" stroke-width="1.300"/>
<circle cx="543" cy="902" r="7" fill="#0f8a1c"/><path d="M540 902l2 2 4-4" fill="none" stroke="#111" stroke-width="1.400"/>
<ellipse cx="578" cy="911.500" rx="11" ry="11.500" fill="url(#sk)"/><path d="M573 904L575.500 903.500 577.500 907.500 575.800 909.500Q577 912.500 580 914L582 912.500 586 914.500 585.500 917Q583 919 578.500 916.500 573.500 913.500 572 908Q571.800 905.500 573 904Z" fill="#fff"/>
<rect x="355" y="928" width="6" height="3" rx="1.500" fill="#9d9d9d"/><rect x="443" y="928" width="6" height="3" rx="1.500" fill="#9d9d9d"/><rect x="487" y="928" width="6" height="3" rx="1.500" fill="#9d9d9d"/><rect x="531" y="928" width="6" height="3" rx="1.500" fill="#9d9d9d"/><rect x="575" y="928" width="6" height="3" rx="1.500" fill="#9d9d9d"/>
</svg>

<div class="t" style="right:18px;top:896px;font-size:11.500px;line-height:16px;color:#f4f4f4;text-align:right">16:11<br>17.12.2025</div>
</body></html>
